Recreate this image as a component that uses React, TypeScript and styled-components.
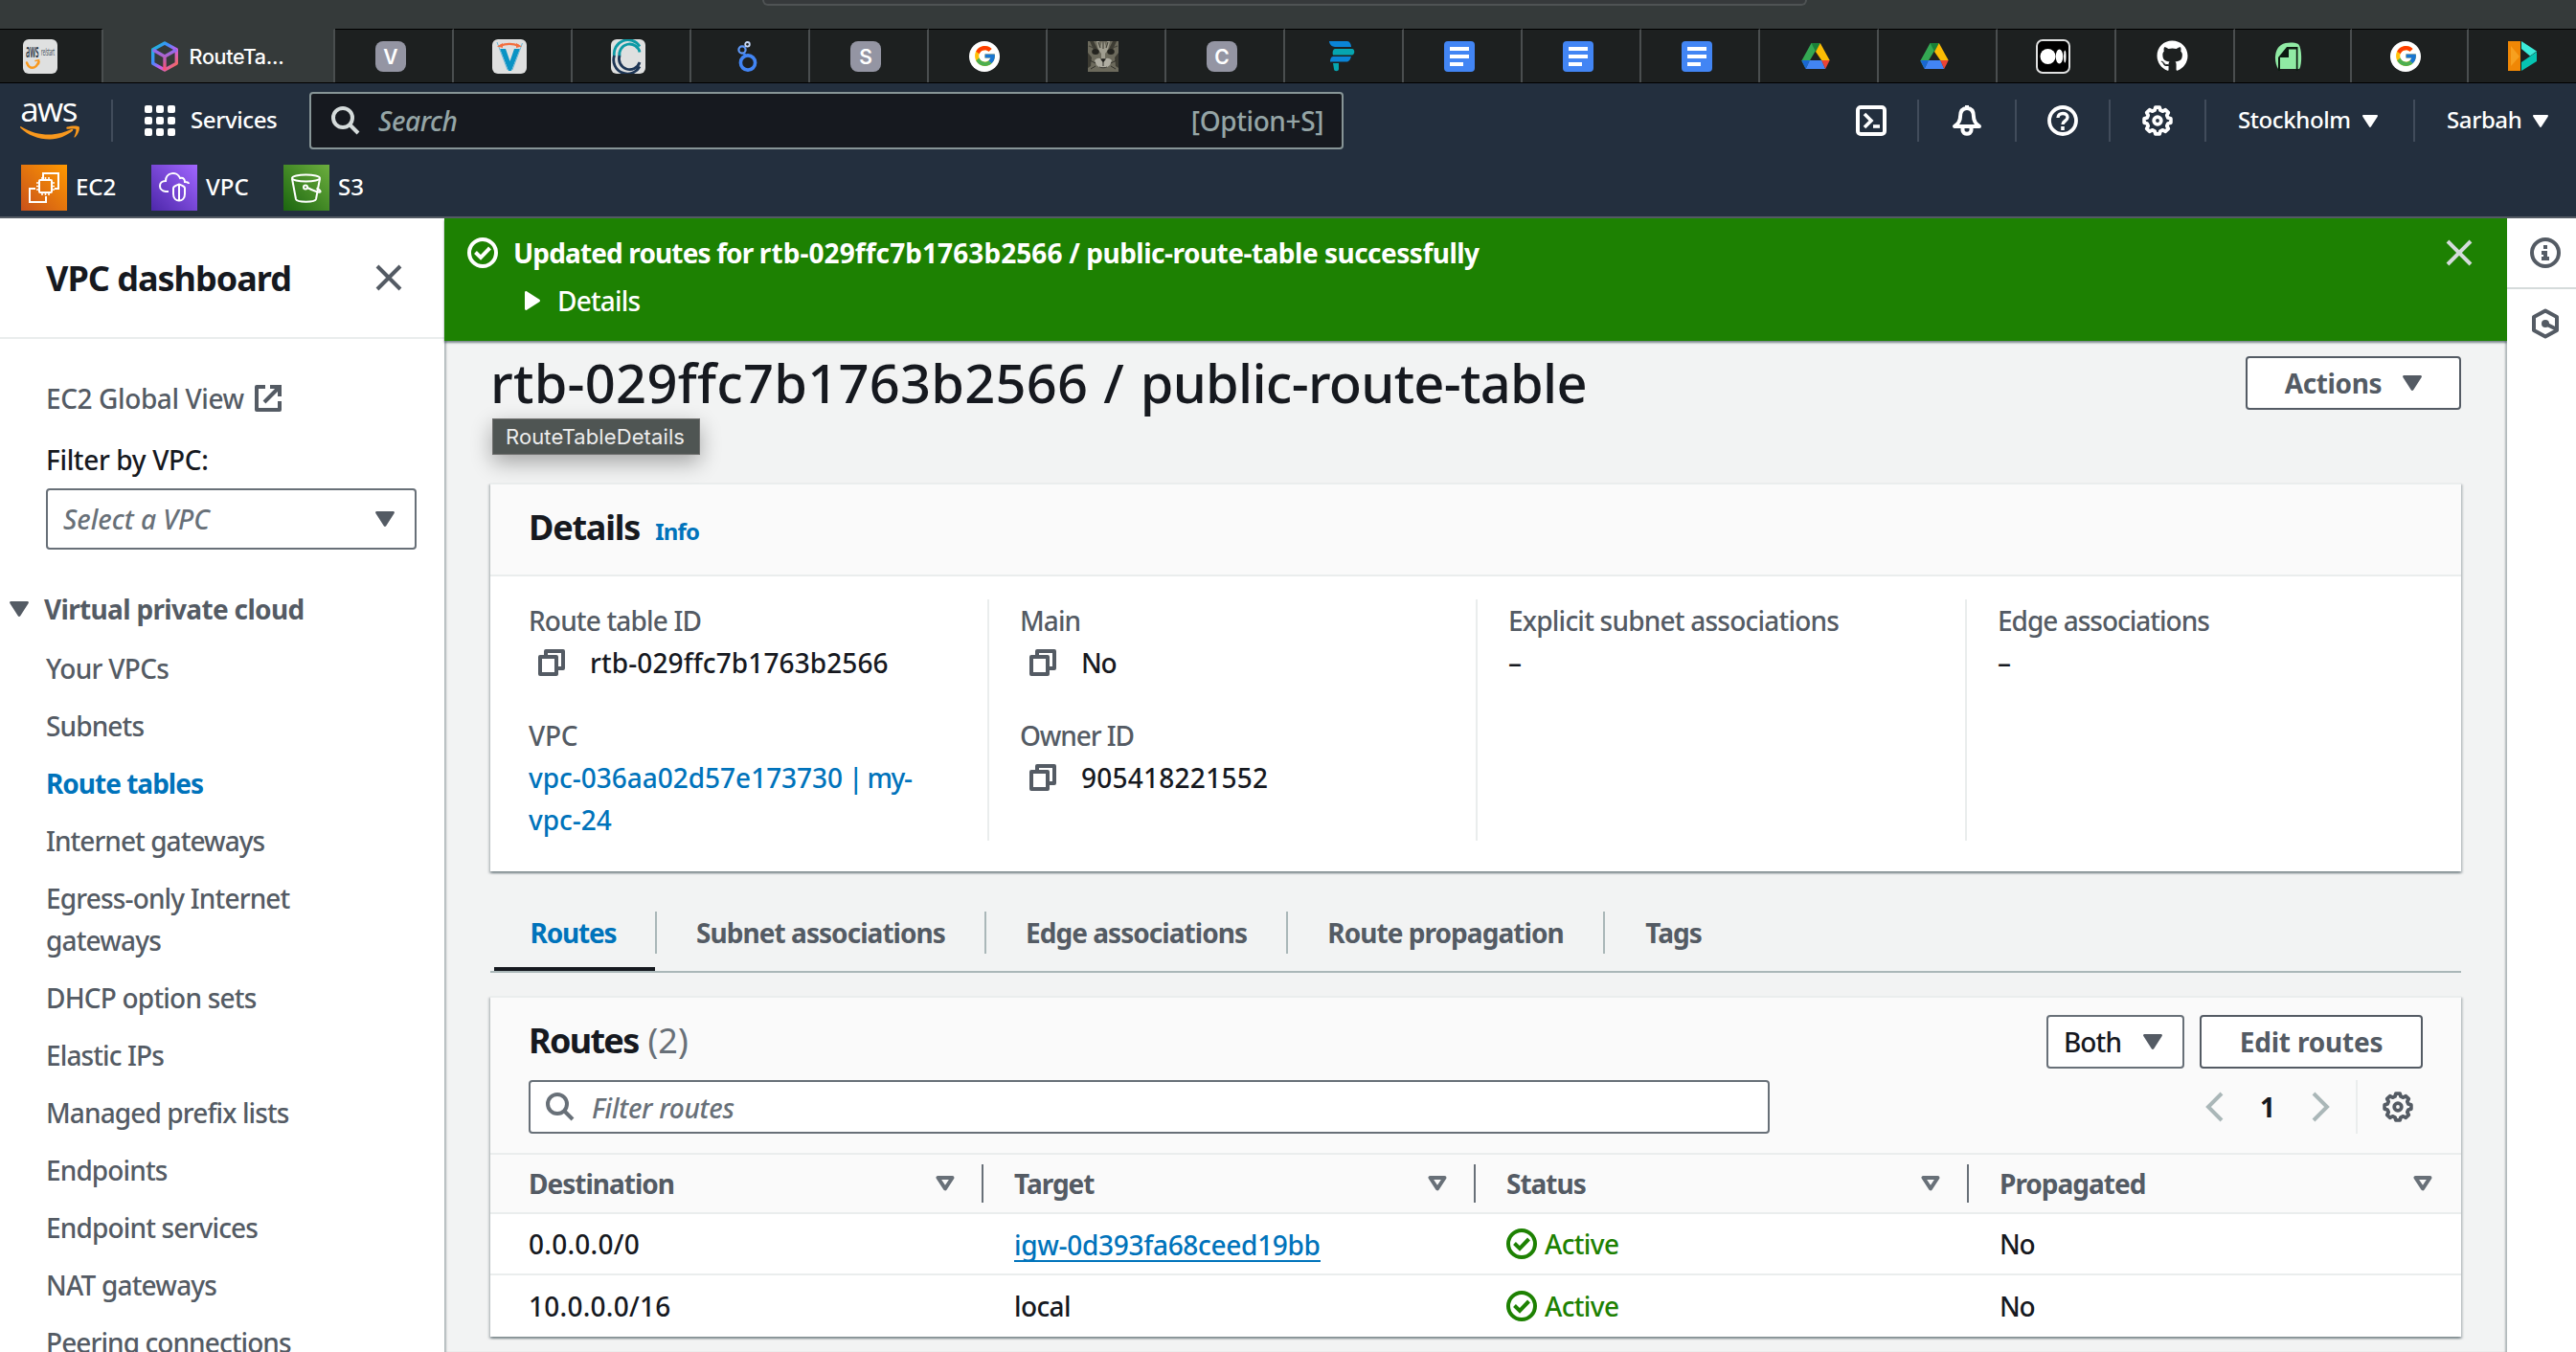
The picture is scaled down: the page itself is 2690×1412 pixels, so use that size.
import React from 'react';
import styled, { createGlobalStyle, css } from 'styled-components';
import { FcGoogle } from 'react-icons/fc';
import { FaGithub } from 'react-icons/fa';

const ink = '#16191f';
const slate = '#545b64';
const grey = '#687078';
const blue = '#0073bb';
const green = '#1d8102';
const rule = '#eaeded';

const GlobalStyle = createGlobalStyle`
  * { box-sizing: border-box; }
  body {
    margin: 0;
    background: #f2f3f3;
    color: ${ink};
    font: 500 28px/44px "Noto Sans", "Open Sans", sans-serif;
    overflow: hidden;
  }
  svg { display: block; flex: none; }
`;

const Txt = styled.span<{ $size?: number; $w?: number; $ls?: number; $c?: string; $i?: boolean; $up?: number }>`
  margin: ${p => -(p.$up ?? 0)}px 0 ${p => p.$up ?? 0}px;
  white-space: nowrap;
  font-size: ${p => p.$size ?? 28}px;
  font-weight: ${p => p.$w ?? 500};
  letter-spacing: ${p => (p.$ls === undefined ? 'normal' : `${p.$ls}px`)};
  ${p => p.$c && css`color: ${p.$c};`}
  ${p => p.$i && css`font-style: italic;`}
`;

const Track = styled.span<{ $ls: number }>`
  letter-spacing: ${p => p.$ls}px;
`;

/* ---------- browser chrome ---------- */

const Page = styled.div`
  width: 2690px;
  height: 1412px;
  display: flex;
  flex-direction: column;
  overflow: hidden;
`;

const Chrome = styled.div`
  height: 30px;
  flex: none;
  background: #353a3a;
`;

const AddressBar = styled.div`
  width: 1091px;
  height: 6px;
  margin-left: 796px;
  border: 2px solid #4f5354;
  border-top: 0;
  border-radius: 0 0 12px 12px;
  background: #36393b;
`;

const TabStrip = styled.div`
  display: flex;
  flex: none;
  height: 57px;
  background: #1d2020;
  border-bottom: 1px solid #000;
`;

const BrowserTab = styled.div<{ $width: number; $active?: boolean; $shift?: number }>`
  display: flex;
  align-items: center;
  justify-content: center;
  gap: 12px;
  flex: none;
  width: ${p => p.$width}px;
  padding-right: ${p => p.$shift ?? 4}px;
  border-top: 1px solid ${p => (p.$active ? '#353a3a' : '#000')};
  border-right: 2px solid #4a4e4f;
  background: ${p => (p.$active ? '#353a3a' : '#1d2020')};
  &:last-child { border-right: 0; }
`;

const TabTitle = styled.span`
  color: #fff;
  font: 500 21.500px/30px Inter, sans-serif;
  letter-spacing: -0.3px;
`;

const LetterIcon = styled.div`
  width: 32px;
  height: 32px;
  border-radius: 8px;
  background: #9495a3;
  color: #fff;
  font: 600 21px/33px Inter, sans-serif;
  text-align: center;
`;

const WhiteTile = styled.div`
  width: 36px;
  height: 36px;
  border-radius: 6px;
  background: #dfe0e0;
  display: flex;
  align-items: center;
  justify-content: center;
  overflow: hidden;
`;

const GoogleDisc = styled.div`
  width: 32px;
  height: 32px;
  border-radius: 50%;
  background: #fff;
  display: flex;
  align-items: center;
  justify-content: center;
`;

const smileArc = 'M1 1.200C12 8 23 10 33 9.400 40 9 47 7 53.500 4c1.300-.6 2.400.7 1.200 1.800C49 10.500 40 14.600 31 14.600 19 14.600 8 10 .5 2.800-.3 1.800.2.700 1 1.200Z';
const smileTip = 'M49 1.600C53 .2 60 .0 61.500 1.300 63 3 60.600 9 57.500 12.300c-.7.6-1.300.3-1-.5C57.400 9.500 59 5 58.200 4 57.400 3 52.500 3.500 50 3.700 48 3.800 47.800 2.200 49 1.600Z';

const Smile = () => (
  <svg width="62" height="15" viewBox="0 0 62 15" fill="#f8981d">
    <path d={smileArc} />
    <path d={smileTip} />
  </svg>
);

const RestartIcon = () => (
  <svg width="36" height="36" viewBox="0 0 36 36" overflow="visible" fontFamily="Open Sans, sans-serif" fill="#232f3e">
    <rect width="36" height="36" rx="6" fill="#dfe0e0" />
    <text x="3" y="18.500" fontSize="19" fontWeight="600" textLength="13.500" lengthAdjust="spacingAndGlyphs">aws</text>
    <text x="19" y="17" fontSize="11.500" textLength="14" lengthAdjust="spacingAndGlyphs">re/start</text>
    <g fill="none" stroke="#f8981d" strokeWidth="2.400" strokeLinecap="round">
      <path d="M4 24.500c2.500 7 9 7.500 12.500-1" />
      <path d="M13 22.500l3.500-.8v4" strokeWidth="1.600" />
    </g>
  </svg>
);

const CubeIcon = () => (
  <svg width="28" height="32" viewBox="0 0 28 32" fill="none" strokeWidth="3.400" strokeLinejoin="round">
    <defs>
      <linearGradient id="cube" x1="0" y1="0" x2="1" y2="1">
        <stop offset="0" stopColor="#12c4c9" />
        <stop offset=".35" stopColor="#3f8cff" />
        <stop offset=".6" stopColor="#c65cf0" />
        <stop offset="1" stopColor="#ff6a35" />
      </linearGradient>
      <linearGradient id="cubeY" x1="0" y1="0" x2="0" y2="1">
        <stop offset="0" stopColor="#8a6cf5" />
        <stop offset="1" stopColor="#ff4f6a" />
      </linearGradient>
    </defs>
    <path d="M14 2 26.300 8.800v14.400L14 30 1.700 23.200V8.800Z" stroke="url(#cube)" />
    <path d="M1.700 9 14 16v14M14 16 26.300 9" stroke="url(#cubeY)" />
  </svg>
);

const VTile = () => (
  <WhiteTile>
    <svg width="32" height="34" viewBox="0 0 32 34">
      <path d="M6 9h6l4.500 13L21 9h6L18 32h-3Z" fill="#0a93c4" />
      <path d="M3 2 14 31M29.500 3 19 31" stroke="#6db6d6" strokeWidth="1" fill="none" />
      <path d="M6 6c6-2.500 14-2.500 20 0" stroke="#f2703f" strokeWidth="2.200" fill="none" />
      <path d="m3 6.500 6-3.500v5ZM29 6.500l-6-3.500v5Z" fill="#f2703f" />
    </svg>
  </WhiteTile>
);

const CTile = () => (
  <WhiteTile>
    <svg width="36" height="36" viewBox="0 0 36 36" fill="none" strokeWidth="2.800">
      <path d="M30 7.500A14.500 14.500 0 0 0 3.500 18" stroke="#0d9aa5" />
      <path d="M3.500 17A14.500 14.500 0 0 0 30 28.500" stroke="#1d3555" />
      <path d="M30 13.500A10.500 10.500 0 0 0 9 18" stroke="#0d9aa5" />
      <path d="M9 17a10.500 10.500 0 0 0 21 7" stroke="#1d3555" />
    </svg>
  </WhiteTile>
);

const LookerIcon = () => (
  <svg width="22" height="32" viewBox="0 0 22 32" fill="none">
    <circle cx="12" cy="22.500" r="7.600" stroke="#4285f4" strokeWidth="3.600" />
    <circle cx="6" cy="9" r="3.600" stroke="#5e97f6" strokeWidth="2.200" />
    <circle cx="11.500" cy="3.300" r="2.300" stroke="#c9dbfb" strokeWidth="1.800" />
    <path d="m7.500 12.500 2.500 3" stroke="#4285f4" strokeWidth="2.600" />
  </svg>
);

const CatIcon = () => (
  <svg width="32" height="32" viewBox="0 0 32 32">
    <rect width="32" height="32" fill="#6c6a5c" />
    <path d="M2 0h4l4 8-4 1ZM30 0h-4l-4 8 4 1ZM0 12l4 5-1 9-3 2ZM32 12l-4 5 1 9 3 2Z" fill="#3d3c33" />
    <path d="M9 0h3l1 6 2-6h2l2 6 1-6h3l-2 9-3 4v5h-4v-5l-3-4Z" fill="#a09e90" />
    <path d="M11 1l2 6M16 0v8M21 1l-2 6M1 5l5 2M31 5l-5 2" stroke="#45443b" strokeWidth="1.200" />
    <ellipse cx="8" cy="11" rx="3.800" ry="3" fill="#24241f" />
    <ellipse cx="24" cy="11" rx="3.800" ry="3" fill="#24241f" />
    <path d="M7 20c3-3 6-3 9 0 3-3 6-3 9 0l-2 5-4 3h-6l-4-3Z" fill="#b0aea2" />
    <path d="M13 18.500h6l-3 4Z" fill="#1f1f1c" />
    <path d="M16 22v4m-4 1c2 1 6 1 8 0M2 20l6 3M30 20l-6 3M3 29l5-3M29 29l-5-3" stroke="#33322c" fill="none" />
  </svg>
);

const PinwheelIcon = () => (
  <svg width="28" height="32" viewBox="0 0 28 32">
    <path d="M1 0h19c2 0 4 3 4 6H7C4 6 1 3 1 0Z" fill="#0a84d6" />
    <path d="M7 8h18c3 0 3 6 0 6.500H5C4 12 5 8 7 8Z" fill="#06a5b0" />
    <path d="M5 16h19c-1 3-2 5.500-5 5.500H2C2 19 3 16 5 16Z" fill="#0a84d6" />
    <path d="M5 23h6v6c0 3-5 3-5 0Z" fill="#06a5b0" />
  </svg>
);

const DocsIcon = () => (
  <svg width="32" height="32" viewBox="0 0 32 32">
    <rect width="32" height="32" rx="4" fill="#4285f4" />
    <path d="M6 6h20v4H6ZM6 14h20v4H6ZM6 22h14v4H6Z" fill="#fff" />
  </svg>
);

const DriveIcon = () => (
  <svg width="30" height="27" viewBox="0 0 30 27">
    <path d="M10.500 0h9.300L7.500 20.500 4.500 26.500.3 18.500Z" fill="#34a853" />
    <path d="M10.500 0h9.300L15 9Z" fill="#188038" />
    <path d="M19.800 0 29.700 18h-8.500L15 9Z" fill="#fbbc04" />
    <path d="M8.800 18h12.600l3.800 9H4.500Z" fill="#4285f4" />
    <path d="M.3 18h8.500L4.500 27Z" fill="#1967d2" />
    <path d="M21.200 18h8.500l-4.500 9Z" fill="#ea4335" />
  </svg>
);

const MediumIcon = () => (
  <svg width="36" height="36" viewBox="0 0 36 36">
    <rect x="1" y="1" width="34" height="34" rx="6" fill="#000" stroke="#dfe0e0" strokeWidth="2" />
    <circle cx="12.500" cy="18" r="8" fill="#fff" />
    <ellipse cx="24.500" cy="18" rx="3.800" ry="7.400" fill="#fff" />
    <ellipse cx="30.300" cy="18" rx="1.200" ry="6.600" fill="#fff" />
  </svg>
);

const LeafIcon = () => (
  <svg width="30" height="30" viewBox="0 0 30 30">
    <path d="M7 3C12 0 20 0 25 2c4 4 4 22 1 26H4C0 22-1 8 7 3Z" fill="#90eba4" />
    <path d="M4 30V16l9-11h11.500v25h-1.700V7.500H15V16H6v14Z" fill="#0c1a10" />
  </svg>
);

const PlayIcon = () => (
  <svg width="32" height="32" viewBox="0 0 32 32">
    <path d="M1 0h13v31H1Z" fill="#f08705" />
    <path d="M4 5l9 11-9 10Z" fill="#f7a01f" />
    <path d="M15 0l16 10.500-7 5L15 8Z" fill="#3cebd9" />
    <path d="M31 11v10L15 31V22Z" fill="#06c4b1" />
  </svg>
);

const Google = () => (
  <GoogleDisc><FcGoogle size={25} /></GoogleDisc>
);

const iconTabs: Array<{ width: number; icon: React.ReactNode; shift?: number }> = [
  { width: 124, icon: <LetterIcon>V</LetterIcon> },
  { width: 124, icon: <VTile /> },
  { width: 124, icon: <CTile /> },
  { width: 124, icon: <LookerIcon /> },
  { width: 124, icon: <LetterIcon>S</LetterIcon> },
  { width: 124, icon: <Google /> },
  { width: 124, icon: <CatIcon /> },
  { width: 124, icon: <LetterIcon>C</LetterIcon> },
  { width: 124, icon: <PinwheelIcon />, shift: 4 },
  { width: 124, icon: <DocsIcon /> },
  { width: 124, icon: <DocsIcon /> },
  { width: 124, icon: <DocsIcon /> },
  { width: 124, icon: <DriveIcon /> },
  { width: 124, icon: <DriveIcon /> },
  { width: 124, icon: <MediumIcon /> },
  { width: 124, icon: <FaGithub size={33} color="#fff" /> },
  { width: 122, icon: <LeafIcon />, shift: 8 },
  { width: 122, icon: <Google />, shift: 8 },
  { width: 112, icon: <PlayIcon />, shift: 0 },
];

/* ---------- console header ---------- */

const Header = styled.header`
  flex: none;
  height: 141px;
  background: #232f3e;
  border-bottom: 2px solid ${slate};
  color: #fff;
`;

const HeaderRow = styled.div`
  display: flex;
  align-items: center;
  height: 78px;
  padding-left: 20px;
`;

const AwsLogo = styled.div`
  display: flex;
  flex-direction: column;
  align-items: center;
  width: 63px;
  height: 40px;
  margin-right: 33px;
`;

const AwsWord = styled.span`
  height: 25px;
  padding-right: 2px;
  font: 500 35px/16px "Open Sans", sans-serif;
  letter-spacing: -1.5px;
`;

const VLine = styled.span<{ $h: number; $c: string }>`
  width: 2px;
  flex: none;
  height: ${p => p.$h}px;
  background: ${p => p.$c};
`;

const Services = styled.div`
  display: flex;
  align-items: center;
  gap: 16px;
  width: 205px;
  padding-left: 33px;
`;

const SearchBox = styled.div`
  display: flex;
  align-items: center;
  gap: 19px;
  width: 1080px;
  height: 60px;
  padding: 0 19px 0 21px;
  border: 2px solid #879596;
  border-radius: 4px;
  background: #16191f;
`;

const Grow = styled.span`flex: 1;`;

const HeadCell = styled.div<{ $width: number; $first?: boolean; $pad?: number }>`
  display: flex;
  align-items: center;
  width: ${p => p.$width}px;
  height: 44px;
  gap: 12px;
  border-left: ${p => (p.$first ? '0' : '2px solid #414c5b')};
  ${p => (p.$pad ? css`padding-left: ${p.$pad}px;` : css`justify-content: center;`)}
`;

const Favorites = styled.div`
  display: flex;
  padding: 7px 0 0 22px;
`;

const Favorite = styled.div<{ $width: number }>`
  display: flex;
  align-items: center;
  gap: 9px;
  width: ${p => p.$width}px;
`;

const Tile = styled.div<{ $from: string; $to: string }>`
  width: 48px;
  height: 48px;
  display: flex;
  align-items: center;
  justify-content: center;
  background: linear-gradient(45deg, ${p => p.$from}, ${p => p.$to});
`;

/* ---------- shared icons ---------- */

const Caret = ({ w = 20, h = 16, color = slate }: { w?: number; h?: number; color?: string }) => (
  <svg width={w} height={h} viewBox="0 0 20 16" fill={color}>
    <path d="M1.500 0h17c1.200 0 1.800 1.100 1.200 2l-8.500 13.300c-.6.9-1.800.9-2.400 0L.3 2C-.3 1.100.3 0 1.500 0Z" />
  </svg>
);

const CaretOutline = () => (
  <svg width="20" height="16" viewBox="0 0 20 16" fill="none" stroke={grey} strokeWidth="4" strokeLinejoin="round">
    <path d="M2.500 2h15L10 13.300Z" />
  </svg>
);

const CloseIcon = ({ color }: { color: string }) => (
  <svg width="28" height="28" viewBox="0 0 28 28" stroke={color} strokeWidth="4" fill="none">
    <path d="M2 2l24 24M26 2 2 26" />
  </svg>
);

const SearchIcon = ({ color }: { color: string }) => (
  <svg width="30" height="30" viewBox="0 0 30 30" stroke={color} strokeWidth="4" fill="none">
    <circle cx="12" cy="12" r="10" />
    <path d="m19 19 9 9" />
  </svg>
);

const CheckIcon = ({ color }: { color: string }) => (
  <svg width="32" height="32" viewBox="0 0 32 32" stroke={color} strokeWidth="4" fill="none">
    <circle cx="16" cy="16" r="14" />
    <path d="m8.500 15.500 5.500 5.500 9.500-10" />
  </svg>
);

const CopyIcon = () => (
  <svg width="28" height="28" viewBox="0 0 28 28" stroke={slate} strokeWidth="4" fill="none" strokeLinejoin="round">
    <path d="M2 8h17v18H2Z" />
    <path d="M8 7V2h18v18h-6" />
  </svg>
);

const gearPath = (() => {
  const pts: string[] = [];
  for (let i = 0; i < 8; i++) {
    const mid = (i * Math.PI) / 4;
    ([[-0.27, 11.300], [-0.15, 14], [0.15, 14], [0.27, 11.300]] as const).forEach(([d, r]) => {
      pts.push(`${(16 + r * Math.sin(mid + d)).toFixed(2)} ${(16 - r * Math.cos(mid + d)).toFixed(2)}`);
    });
  }
  return `M${pts.join('L')}Z`;
})();

const GearIcon = ({ color }: { color: string }) => (
  <svg width="32" height="32" viewBox="0 0 32 32" stroke={color} strokeWidth="3.800" fill="none" strokeLinejoin="round">
    <path d={gearPath} />
    <circle cx="16" cy="16" r="3.800" />
  </svg>
);

const ChevronIcon = ({ flip }: { flip?: boolean }) => (
  <svg width="20" height="32" viewBox="0 0 20 32" stroke="#aab7b8" strokeWidth="4" fill="none">
    <path d={flip ? 'M2 2l14 14L2 30' : 'M18 2 4 16l14 14'} />
  </svg>
);

/* ---------- body ---------- */

const Body = styled.div`
  display: flex;
  flex: 1;
  min-height: 0;
`;

const Sidebar = styled.aside`
  width: 464px;
  flex: none;
  background: #fff;
  overflow: hidden;
`;

const SideHead = styled.div`
  display: flex;
  align-items: center;
  justify-content: space-between;
  height: 126px;
  padding: 0 44px 0 48px;
  border-bottom: 2px solid ${rule};
`;

const SideBody = styled.div`
  padding: 40px 29px 0 48px;
`;

const IconLine = styled.div<{ $gap: number }>`
  display: flex;
  align-items: center;
  gap: ${p => p.$gap}px;
  height: 44px;
`;

const FilterLabel = styled.div`
  display: flex;
  height: 44px;
  margin: 20px 0 8px;
`;

const SelectBox = styled.div`
  display: flex;
  align-items: center;
  justify-content: space-between;
  height: 64px;
  padding: 0 21px 0 16px;
  border: 2px solid ${grey};
  border-radius: 4px;
`;

const Section = styled(IconLine)`
  margin: 40px 0 18px -38px;
`;

const NavList = styled.nav`
  display: flex;
  flex-direction: column;
  gap: 16px;
`;

const NavItem = styled.a<{ $on?: boolean; $ls?: number }>`
  max-width: 340px;
  color: ${p => (p.$on ? blue : slate)};
  font-weight: ${p => (p.$on ? 700 : 500)};
  letter-spacing: ${p => p.$ls ?? (p.$on ? -1 : -0.88)}px;
`;

const Main = styled.main`
  width: 2154px;
  flex: none;
  background: #f2f3f3;
  box-shadow: inset 3px 0 2px -1px rgba(0, 28, 36, 0.28), inset -3px 0 2px -1px rgba(0, 28, 36, 0.28);
`;

const Banner = styled.div`
  display: flex;
  height: 128px;
  padding: 14px 36px 0 24px;
  background: ${green};
  color: #fff;
  box-shadow: 0 2px 2px rgba(0, 28, 36, 0.5);
`;

const BannerIcon = styled.div<{ $w: number }>`
  width: ${p => p.$w}px;
  height: 44px;
  display: flex;
  align-items: center;
`;

const BannerText = styled.div`
  flex: 1;
  display: flex;
  flex-direction: column;
  gap: 6px;
`;

const DetailsToggle = styled(IconLine)`
  padding-left: 12px;
`;

const Content = styled.div`
  padding: 16px 48px 0;
`;

const TitleRow = styled.div`
  display: flex;
  align-items: center;
  justify-content: space-between;
  height: 56px;
  margin-bottom: 76px;
  position: relative;
`;

const Tooltip = styled.div`
  position: absolute;
  left: 2px;
  top: 65px;
  width: 217px;
  height: 38px;
  padding-left: 13px;
  border: 1px solid #70706f;
  background: #4f5553;
  color: #ececec;
  font: 400 22px/36px Inter, sans-serif;
  letter-spacing: 0.1px;
  box-shadow: 0 8px 22px rgba(0, 0, 0, 0.32);
`;

const Button = styled.div<{ $width: number; $gap?: number; $c?: string; $right?: number }>`
  display: flex;
  align-items: center;
  justify-content: center;
  gap: ${p => p.$gap ?? 0}px;
  width: ${p => p.$width}px;
  height: 56px;
  padding-right: ${p => p.$right ?? 0}px;
  border: 2px solid ${p => p.$c ?? slate};
  border-radius: 4px;
  background: #fff;
`;

const Card = styled.section`
  background: #fff;
  border-top: 2px solid ${rule};
  box-shadow: 0 2px 2px rgba(0, 28, 36, 0.3), 2px 2px 2px rgba(0, 28, 36, 0.15), -2px 2px 2px rgba(0, 28, 36, 0.15);
`;

const CardHead = styled.div`
  display: flex;
  align-items: center;
  height: 96px;
  padding: 0 0 3px 40px;
  background: #fafafa;
  border-bottom: 2px solid ${rule};
`;

const InfoLink = styled.span`
  display: flex;
  padding: 7px 0 0 16px;
`;

const Columns = styled.div`
  display: grid;
  grid-template-columns: 479px 510px 511px 1fr;
  height: 308px;
  padding: 24px 40px 32px;
`;

const Column = styled.div`
  display: flex;
  flex-direction: column;
  gap: 32px;
  &:not(:first-child) {
    padding-left: 32px;
    border-left: 2px solid ${rule};
  }
`;

const Field = styled.div`
  display: flex;
  flex-direction: column;
`;

const CopyValue = styled(IconLine)`
  padding-left: 10px;
`;

const TabBar = styled.div`
  display: flex;
  height: 64px;
  margin-top: 42px;
  padding-left: 4px;
  border-bottom: 2px solid #aab7b8;
`;

const Tab = styled.div<{ $width: number; $on?: boolean; $last?: boolean }>`
  display: flex;
  flex-direction: column;
  justify-content: space-between;
  width: ${p => p.$width}px;
  text-align: center;
  color: ${p => (p.$on ? blue : slate)};
  &::after {
    content: '';
    height: ${p => (p.$on ? 4 : 0)}px;
    margin-right: 2px;
    background: ${ink};
  }
  > div {
    height: 44px;
    padding-right: ${p => (p.$on ? 3 : 0)}px;
    border-right: ${p => (p.$last ? '0' : '2px solid #aab7b8')};
  }
`;

const RoutesCard = styled(Card)`
  margin-top: 24px;
`;

const Tools = styled.div`
  display: flex;
  flex-direction: column;
  gap: 12px;
  height: 164px;
  padding: 18px 40px 0;
  background: #fafafa;
  border-bottom: 2px solid ${rule};
`;

const ToolRow = styled.div`
  display: flex;
  align-items: center;
  justify-content: space-between;
  height: 56px;
`;

const Cluster = styled.div<{ $gap: number }>`
  display: flex;
  align-items: center;
  gap: ${p => p.$gap}px;
`;

const FilterBox = styled.div`
  display: flex;
  align-items: center;
  gap: 18px;
  width: 1296px;
  height: 56px;
  padding-left: 16px;
  border: 2px solid ${grey};
  border-radius: 4px;
  background: #fff;
`;

const Pager = styled.div`
  display: flex;
  align-items: center;
`;

const PageNo = styled.span`
  width: 92px;
  text-align: center;
`;

const GearSlot = styled.div`
  width: 70px;
  height: 56px;
  padding-left: 26px;
  display: flex;
  align-items: center;
  border-left: 2px solid ${rule};
`;

const GridRow = styled.div<{ $head?: boolean; $last?: boolean }>`
  display: grid;
  grid-template-columns: 515px 514px 515px 514px;
  align-items: center;
  height: ${p => (p.$head ? 62 : 64)}px;
  background: ${p => (p.$head ? '#fafafa' : '#fff')};
  border-bottom: ${p => (p.$last ? '0' : `2px solid ${rule}`)};
`;

const HeadGridCell = styled.div`
  display: flex;
  align-items: center;
  justify-content: space-between;
  height: 40px;
  padding: 0 28px 0 32px;
  border-right: 2px solid ${grey};
  &:first-child { padding-left: 40px; }
  &:last-child { border-right: 0; padding-right: 30px; }
`;

const Cell = styled.div`
  display: flex;
  align-items: center;
  gap: 8px;
  height: 44px;
  padding-left: 32px;
  &:first-child { padding-left: 40px; }
`;

const Link = styled.a`
  height: 38px;
  line-height: 40px;
  white-space: nowrap;
  letter-spacing: -0.3px;
  color: ${blue};
  border-bottom: 2px solid ${blue};
`;

const Rail = styled.aside`
  flex: 1;
  background: #fff;
`;

const RailButton = styled.div<{ $line?: boolean }>`
  display: flex;
  justify-content: center;
  align-items: center;
  height: ${p => (p.$line ? 74 : 72)}px;
  padding-left: 8px;
  border-bottom: ${p => (p.$line ? '2px solid #d5dbdb' : '0')};
`;

const navItems: Array<{ label: string; on?: boolean; ls?: number }> = [
  { label: 'Your VPCs', ls: -0.7 },
  { label: 'Subnets' },
  { label: 'Route tables', on: true },
  { label: 'Internet gateways', ls: -0.95 },
  { label: 'Egress-only Internet gateways', ls: -0.84 },
  { label: 'DHCP option sets', ls: -0.8 },
  { label: 'Elastic IPs' },
  { label: 'Managed prefix lists' },
  { label: 'Endpoints' },
  { label: 'Endpoint services', ls: -0.84 },
  { label: 'NAT gateways', ls: -0.8 },
  { label: 'Peering connections', ls: -0.92 },
];

const tabs = [
  { label: 'Routes', width: 170, on: true, ls: -1.200 },
  { label: 'Subnet associations', width: 344, ls: -0.95 },
  { label: 'Edge associations', width: 315, ls: -0.95 },
  { label: 'Route propagation', width: 331, ls: -0.95 },
  { label: 'Tags', width: 143, last: true, ls: -0.95 },
];

const routes = [
  { dest: '0.0.0.0/0', target: 'igw-0d393fa68ceed19bb', link: true },
  { dest: '10.0.0.0/16', target: 'local', link: false },
];

export default function App() {
  return (
    <Page>
      <GlobalStyle />
      <Chrome><AddressBar /></Chrome>
      <TabStrip>
        <BrowserTab $width={108} $shift={22}><RestartIcon /></BrowserTab>
        <BrowserTab $width={242} $active $shift={2}>
          <CubeIcon />
          <TabTitle>RouteTa...</TabTitle>
        </BrowserTab>
        {iconTabs.map((t, i) => (
          <BrowserTab key={i} $width={t.width} $shift={t.shift ?? 6}>{t.icon}</BrowserTab>
        ))}
      </TabStrip>

      <Header>
        <HeaderRow>
          <AwsLogo>
            <AwsWord>aws</AwsWord>
            <Smile />
          </AwsLogo>
          <VLine $h={44} $c="#414c5b" />
          <Services>
            <svg width="32" height="32" viewBox="0 0 32 32" fill="#fff">
              {[0, 12, 24].map(y => [0, 12, 24].map(x => (
                <rect key={`${x}-${y}`} x={x} y={y} width="8" height="8" rx="2" />
              )))}
            </svg>
            <Txt $size={24} $ls={-0.4} $up={1}>Services</Txt>
          </Services>
          <SearchBox>
            <SearchIcon color="#d5dbdb" />
            <Txt $i $c="#95a5a6" $ls={-0.4}>Search</Txt>
            <Grow />
            <Txt $c="#95a5a6" $ls={-0.4}>[Option+S]</Txt>
          </SearchBox>
          <Grow />
          <HeadCell $width={96} $first>
            <svg width="32" height="32" viewBox="0 0 32 32" fill="none" stroke="#fff" strokeWidth="4">
              <rect x="2" y="2" width="28" height="28" rx="3" />
              <path d="m9 9 7 7-7 7" strokeWidth="3.600" />
              <path d="M18 22h7" strokeWidth="3.600" />
            </svg>
          </HeadCell>
          <HeadCell $width={102}>
            <svg width="32" height="32" viewBox="0 0 32 32" fill="none" stroke="#fff" strokeWidth="4" strokeLinejoin="round">
              <path d="M16 3c-5 0-7 4-7 9 0 5-3 8-6 10h26c-3-2-6-5-6-10 0-5-2-9-7-9Z" />
              <path d="M16 0v3" />
              <path d="M11.500 23v3c0 5 9 5 9 0v-3" />
            </svg>
          </HeadCell>
          <HeadCell $width={98}>
            <svg width="32" height="32" viewBox="0 0 32 32" fill="none" stroke="#fff" strokeWidth="3.800">
              <circle cx="16" cy="16" r="14" />
              <path d="M11 13c0-6 10-6 10-.5 0 4-5 3.500-5 7.500" strokeWidth="3.400" />
              <path d="M16 22v4" strokeWidth="3.600" />
            </svg>
          </HeadCell>
          <HeadCell $width={100}><GearIcon color="#fff" /></HeadCell>
          <HeadCell $width={218} $pad={33}>
            <Txt $size={24} $ls={-0.4} $up={1}>Stockholm</Txt>
            <Caret w={16} h={13} color="#fff" />
          </HeadCell>
          <HeadCell $width={170} $pad={33}>
            <Txt $size={24} $ls={-0.4} $up={1}>Sarbah</Txt>
            <Caret w={16} h={13} color="#fff" />
          </HeadCell>
        </HeaderRow>
        <Favorites>
          <Favorite $width={136}>
            <Tile $from="#c8511b" $to="#ff9900">
              <svg width="48" height="48" viewBox="0 0 48 48" fill="none" stroke="#fff" strokeWidth="2">
                <path d="M15 25H9v14h17v-6M23 15V9h16v16h-4" />
                <rect x="19" y="16" width="13" height="13" rx="1" />
                <path d="M22 16v-3m3.500 3v-3m3.500 3v-3M22 32v-3m3.500 3v-3m3.500 3v-3M16 19h3m-3 3.500h3M16 26h3m13-7h3m-3 3.500h3M32 26h3" strokeWidth="1.600" />
              </svg>
            </Tile>
            <Txt $size={24} $up={1}>EC2</Txt>
          </Favorite>
          <Favorite $width={138}>
            <Tile $from="#4d27aa" $to="#a166ff">
              <svg width="48" height="48" viewBox="0 0 48 48" fill="none" stroke="#fff" strokeWidth="2">
                <path d="M18 28h-3c-8-1-8-11 0-11 0-9 12-11 15-3 4-1 5 2 5 4 3 0 4 1 4 2" />
                <path d="M29 20.500c-3 1-6 2.500-6 4v6c0 5 3 7 6 7s6-2 6-7v-6c0-1.500-3-3-6-4ZM29 21v16" />
              </svg>
            </Tile>
            <Txt $size={24} $up={1}>VPC</Txt>
          </Favorite>
          <Favorite $width={120}>
            <Tile $from="#1b660f" $to="#6cae3e">
              <svg width="48" height="48" viewBox="0 0 48 48" fill="none" stroke="#fff" strokeWidth="2">
                <ellipse cx="23.500" cy="14" rx="14.500" ry="3.600" />
                <path d="M9 14.500 13 36c1 3.500 20 3.500 21 0l4-21.500" />
                <circle cx="23" cy="23.500" r="2" />
                <path d="M25 24c5 2.500 12 5.500 13.500 4.500.8-1-1-2.500-4-4" />
              </svg>
            </Tile>
            <Txt $size={24} $up={1}>S3</Txt>
          </Favorite>
        </Favorites>
      </Header>

      <Body>
        <Sidebar>
          <SideHead>
            <Txt $size={36} $w={700} $ls={-1} $up={-1}>VPC dashboard</Txt>
            <CloseIcon color={slate} />
          </SideHead>
          <SideBody>
            <IconLine $gap={11}>
              <Txt $c={slate} $ls={-0.4}>EC2 Global View</Txt>
              <svg width="28" height="28" viewBox="0 0 28 28" fill="none" stroke={slate} strokeWidth="4">
                <path d="M11 2H2v24h24v-9" strokeLinejoin="round" />
                <path d="M16 2h10v10M26 2 10 18" />
              </svg>
            </IconLine>
            <FilterLabel><Txt $ls={-0.35}>Filter by VPC:</Txt></FilterLabel>
            <SelectBox>
              <Txt $i $c={grey} $ls={0}>Select a VPC</Txt>
              <Caret />
            </SelectBox>
            <Section $gap={16}>
              <Caret />
              <Txt $w={700} $c={slate} $ls={-0.67}>Virtual private cloud</Txt>
            </Section>
            <NavList>
              {navItems.map(n => <NavItem key={n.label} $on={n.on} $ls={n.ls}>{n.label}</NavItem>)}
            </NavList>
          </SideBody>
        </Sidebar>

        <Main>
          <Banner>
            <BannerIcon $w={48}><CheckIcon color="#fff" /></BannerIcon>
            <BannerText>
              <Txt $w={700} $ls={-0.5}>
                <Track $ls={-0.86}>Updated routes for </Track>
                <Track $ls={0.08}>rtb-029ffc7b1763b2566</Track>
                {' / public-route-table successfully'}
              </Txt>
              <DetailsToggle $gap={18}>
                <svg width="16" height="20" viewBox="0 0 16 20" fill="#fff">
                  <path d="M0 1.500C0 .3 1.100-.3 2 .3l13.300 8.500c.9.6.9 1.800 0 2.400L2 19.700c-.9.600-2 0-2-1.200Z" />
                </svg>
                <Txt $ls={-0.8}>Details</Txt>
              </DetailsToggle>
            </BannerText>
            <BannerIcon $w={28}><CloseIcon color="#d5dbdb" /></BannerIcon>
          </Banner>

          <Content>
            <TitleRow>
              <Txt $size={56} $up={1}>
                <Track $ls={0.25}>rtb-029ffc7b1763b2566</Track>
                <Track $ls={1.200}>{' / '}</Track>
                <Track $ls={-0.72}>public-route-table</Track>
              </Txt>
              <Button $width={225} $gap={22}>
                <Txt $w={700} $c={slate} $ls={-0.35}>Actions</Txt>
                <Caret />
              </Button>
              <Tooltip>RouteTableDetails</Tooltip>
            </TitleRow>

            <Card>
              <CardHead>
                <Txt $size={36} $w={700} $ls={-1.200} $up={1}>Details</Txt>
                <InfoLink><Txt $size={24} $w={700} $c={blue} $ls={-0.8}>Info</Txt></InfoLink>
              </CardHead>
              <Columns>
                <Column>
                  <Field>
                    <Txt $c={slate} $ls={-0.83}>Route table ID</Txt>
                    <CopyValue $gap={26}><CopyIcon /><Txt $ls={0.1}>rtb-029ffc7b1763b2566</Txt></CopyValue>
                  </Field>
                  <Field>
                    <Txt $c={slate} $ls={-0.3}>VPC</Txt>
                    <Txt $c={blue}>
                      <Track $ls={-0.02}>vpc-036aa02d57e173730</Track>
                      <Track $ls={-1.500}>{' | my-'}</Track>
                    </Txt>
                    <Txt $c={blue}>vpc-24</Txt>
                  </Field>
                </Column>
                <Column>
                  <Field>
                    <Txt $c={slate} $ls={-0.9}>Main</Txt>
                    <CopyValue $gap={26}><CopyIcon /><Txt $ls={-1.300}>No</Txt></CopyValue>
                  </Field>
                  <Field>
                    <Txt $c={slate} $ls={-1.100}>Owner ID</Txt>
                    <CopyValue $gap={26}><CopyIcon /><Txt $ls={0.25}>905418221552</Txt></CopyValue>
                  </Field>
                </Column>
                <Column>
                  <Field>
                    <Txt $c={slate} $ls={-0.78}>Explicit subnet associations</Txt>
                    <Txt>–</Txt>
                  </Field>
                </Column>
                <Column>
                  <Field>
                    <Txt $c={slate} $ls={-1}>Edge associations</Txt>
                    <Txt>–</Txt>
                  </Field>
                </Column>
              </Columns>
            </Card>

            <TabBar>
              {tabs.map(t => (
                <Tab key={t.label} $width={t.width} $on={t.on} $last={t.last}>
                  <div><Txt $w={700} $ls={t.ls}>{t.label}</Txt></div>
                </Tab>
              ))}
            </TabBar>

            <RoutesCard>
              <Tools>
                <ToolRow>
                  <Cluster $gap={10}>
                    <Txt $size={36} $w={700} $ls={-1.700} $up={1}>Routes</Txt>
                    <Txt $size={36} $w={400} $c={grey} $up={1}>(2)</Txt>
                  </Cluster>
                  <Cluster $gap={16}>
                    <Button $width={144} $gap={23} $c={grey} $right={5}>
                      <Txt $ls={-0.9}>Both</Txt>
                      <Caret />
                    </Button>
                    <Button $width={233}><Txt $w={700} $c={slate} $ls={-0.2}>Edit routes</Txt></Button>
                  </Cluster>
                </ToolRow>
                <ToolRow>
                  <FilterBox>
                    <SearchIcon color={grey} />
                    <Txt $i $c={grey} $ls={-0.25} $up={-1}>Filter routes</Txt>
                  </FilterBox>
                  <Cluster $gap={26}>
                    <Pager>
                      <ChevronIcon />
                      <PageNo><Txt $w={700}>1</Txt></PageNo>
                      <ChevronIcon flip />
                    </Pager>
                    <GearSlot><GearIcon color={slate} /></GearSlot>
                  </Cluster>
                </ToolRow>
              </Tools>
              <GridRow $head>
                {['Destination', 'Target', 'Status', 'Propagated'].map(h => (
                  <HeadGridCell key={h}>
                    <Txt $w={700} $c={slate} $ls={-1}>{h}</Txt>
                    <CaretOutline />
                  </HeadGridCell>
                ))}
              </GridRow>
              {routes.map((r, i) => (
                <GridRow key={r.dest} $last={i === routes.length - 1}>
                  <Cell><Txt $ls={0.25}>{r.dest}</Txt></Cell>
                  <Cell>{r.link ? <Link>{r.target}</Link> : <Txt $ls={-0.6}>{r.target}</Txt>}</Cell>
                  <Cell><CheckIcon color={green} /><Txt $c={green} $ls={-0.65}>Active</Txt></Cell>
                  <Cell><Txt $ls={-1.300}>No</Txt></Cell>
                </GridRow>
              ))}
            </RoutesCard>
          </Content>
        </Main>

        <Rail>
          <RailButton $line>
            <svg width="32" height="32" viewBox="0 0 32 32" fill="none" stroke={slate} strokeWidth="4">
              <circle cx="16" cy="16" r="14" />
              <path d="M14 8h4v4h-4ZM12 14h6v6h2v4h-8v-4h2v-2h-2Z" fill={slate} stroke="none" />
            </svg>
          </RailButton>
          <RailButton>
            <svg width="32" height="32" viewBox="0 0 32 32" fill="none" stroke={slate} strokeWidth="4" strokeLinejoin="round">
              <path d="M16 2.500 28 9v14l-12 6.500L4 23V9Z" />
              <path d="m16 16 12 6" />
              <circle cx="16" cy="16" r="4" fill={slate} stroke="none" />
            </svg>
          </RailButton>
        </Rail>
      </Body>
    </Page>
  );
}
